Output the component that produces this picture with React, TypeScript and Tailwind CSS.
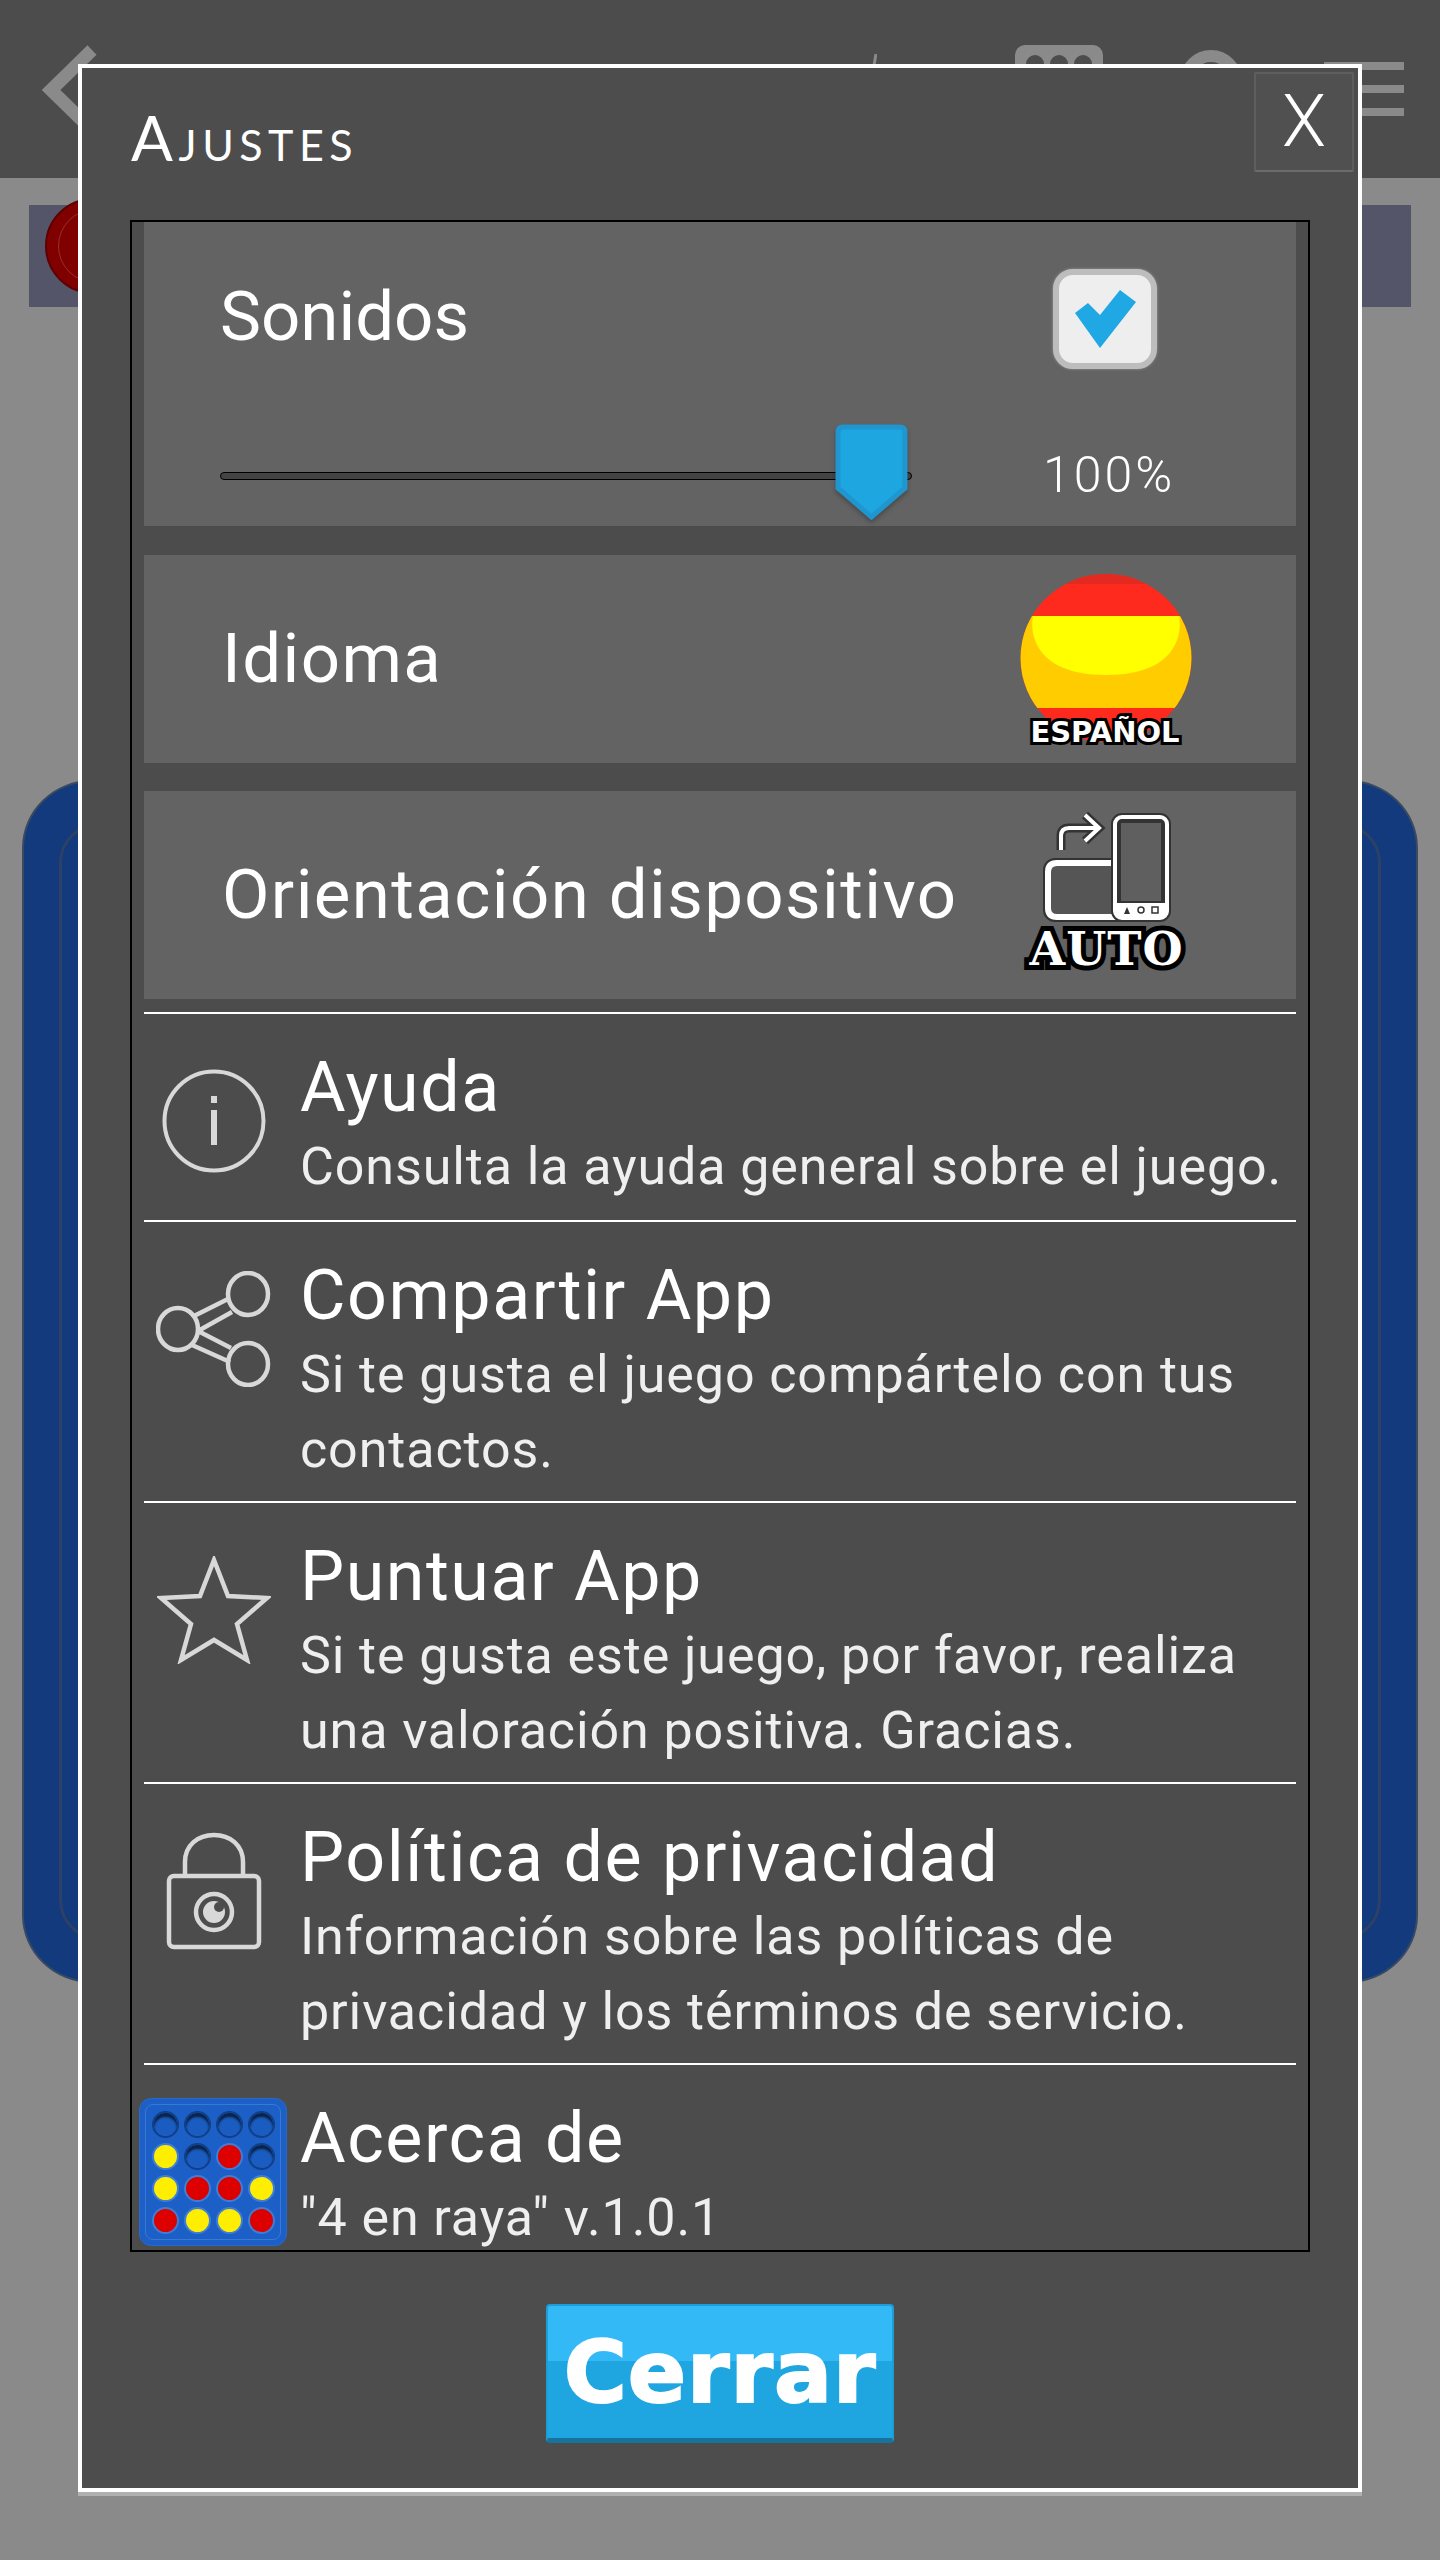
import type { ReactNode } from "react";

const bodyFont = "font-['Roboto',sans-serif]";

function Disc({ color }: { color: "none" | "red" | "yellow" }) {
  if (color === "none") {
    return (
      <div className="h-[27px] w-[27px] rounded-full border-2 border-[#123f86] bg-[#1a5cc0] shadow-[inset_0_4px_2px_#0a2448]" />
    );
  }

  return (
    <div
      className={
        color === "red"
          ? "h-[27px] w-[27px] rounded-full border-2 border-[#3f7ed6] bg-[#dd0000]"
          : "h-[27px] w-[27px] rounded-full border-2 border-[#3f7ed6] bg-[#ffee00]"
      }
    />
  );
}

function BoardIcon() {
  const cells: ("none" | "red" | "yellow")[] = [
    "none", "none", "none", "none",
    "yellow", "none", "red", "none",
    "yellow", "red", "red", "yellow",
    "red", "yellow", "yellow", "red",
  ];

  return (
    <div className="h-[148px] w-[148px] shrink-0 rounded-[12px] border border-[#2a68c8] bg-[#1c5fc6] p-[5px]">
      <div className="grid h-full w-full grid-cols-4 place-items-center rounded-[8px] border border-[#3a78d2] p-[3px]">
        {cells.map((cell, index) => (
          <Disc key={index} color={cell} />
        ))}
      </div>
    </div>
  );
}

function InfoIcon() {
  return (
    <svg viewBox="0 0 104 104" className="h-[104px] w-[104px]" fill="none" stroke="#d8d8d8">
      <circle cx="52" cy="52" r="49.5" strokeWidth="4" />
      <rect x="49" y="27" width="6" height="7" fill="#d8d8d8" stroke="none" />
      <rect x="49" y="41" width="6" height="35" fill="#d8d8d8" stroke="none" />
    </svg>
  );
}

function ShareIcon() {
  return (
    <svg viewBox="0 0 116 116" className="h-[116px] w-[116px]" fill="none" stroke="#d8d8d8" strokeWidth="4.5">
      <ellipse cx="22" cy="58" rx="20" ry="21" />
      <ellipse cx="92" cy="23" rx="20" ry="21" />
      <ellipse cx="92" cy="93" rx="20" ry="21" />
      <path d="M38 45 74 27M42 60 76 41M42 60 75 77M36 74 74 91" />
    </svg>
  );
}

function StarIcon() {
  return (
    <svg viewBox="0 0 114 108" className="h-[108px] w-[114px]" fill="none" stroke="#d8d8d8" strokeWidth="4.5">
      <path d="M57 4 71 40 110 42 80 68 90 104 57 84 24 104 34 68 4 42 43 40Z" strokeLinejoin="miter" />
    </svg>
  );
}

function LockIcon() {
  return (
    <svg viewBox="0 0 96 118" className="h-[118px] w-[96px]" fill="none" stroke="#d8d8d8" strokeWidth="4.5">
      <path d="M19 44V30C19 13 32 3 48 3s29 10 29 27v14" />
      <rect x="3" y="44" width="90" height="71" rx="5" />
      <circle cx="48" cy="80" r="18" />
      <circle cx="48" cy="80" r="11" fill="#d8d8d8" stroke="none" />
      <circle cx="53" cy="75" r="5" fill="#4b4c4b" stroke="none" />
    </svg>
  );
}

function SpainBall() {
  return (
    <div className="relative h-[178px] w-[172px]">
      <svg viewBox="0 0 172 178" className="h-full w-full">
        <defs>
          <clipPath id="ball">
            <ellipse cx="86" cy="88" rx="85.5" ry="84" />
          </clipPath>
        </defs>
        <g clipPath="url(#ball)">
          <rect x="0" y="0" width="172" height="178" fill="#ff2a1e" />
          <rect x="0" y="0" width="172" height="14" fill="#e22a20" />
          <rect x="0" y="46" width="172" height="92" fill="#ffcc00" />
          <path d="M13 46H159C162 60 160 105 86 105 12 105 10 60 13 46Z" fill="#ffff00" />
        </g>
      </svg>
      <span className="absolute right-[6px] bottom-0 left-[4px] text-center font-['DejaVu_Sans',sans-serif] text-[29px] leading-[31px] font-bold whitespace-nowrap text-white [-webkit-text-stroke:6px_black] [paint-order:stroke_fill]">
        ESPAÑOL
      </span>
    </div>
  );
}

function RotateIcon() {
  return (
    <div className="relative h-[166px] w-[163px]">
      <svg viewBox="0 0 163 112" className="h-[112px] w-[163px]" fill="none">
        <path d="M36 38V24Q36 16 44 16H72M60 3 74 16 60 29" stroke="#333" strokeWidth="9" />
        <path d="M36 38V24Q36 16 44 16H72M60 3 74 16 60 29" stroke="#fff" strokeWidth="4" />
        <rect x="22" y="50" width="90" height="56" rx="8" fill="#555" stroke="#333" strokeWidth="8" />
        <path d="M96 51H32Q23 51 23 60V96Q23 105 32 105H96" stroke="#fff" strokeWidth="6" />
        <rect x="90" y="5" width="52" height="101" rx="7" fill="#5f5f5f" stroke="#333" strokeWidth="8" />
        <rect x="90" y="5" width="52" height="101" rx="7" stroke="#fff" strokeWidth="4" />
        <rect x="95" y="10" width="42" height="80" stroke="#333" strokeWidth="2" />
        <rect x="92" y="91" width="48" height="14" fill="#fff" />
        <path d="M99 102 102 95 105 102Z" fill="#333" />
        <circle cx="116" cy="98" r="3" stroke="#333" strokeWidth="1.5" />
        <rect x="127" y="95" width="6" height="6" stroke="#333" strokeWidth="1.5" />
      </svg>
      <span className="absolute right-0 bottom-[6px] left-0 text-center font-['DejaVu_Serif',serif] text-[46px] leading-[46px] font-bold tracking-[1px] whitespace-nowrap text-white [-webkit-text-stroke:10px_black] [paint-order:stroke_fill]">
        AUTO
      </span>
    </div>
  );
}

function SettingRow({ label, padding, children }: { label: string; padding: string; children: ReactNode }) {
  return (
    <div className={`flex h-[208px] items-center justify-between bg-[#636363] pl-[78px] ${padding}`}>
      <span className="text-[69px] tracking-[1.4px] text-white">{label}</span>
      {children}
    </div>
  );
}

function MenuRow({
  icon,
  title,
  text,
  tall,
}: {
  icon: ReactNode;
  title: string;
  text: ReactNode;
  tall?: boolean;
}) {
  return (
    <div
      className={
        tall
          ? "flex h-[281px] gap-[16px] border-t-2 border-white"
          : "flex h-[208px] gap-[16px] border-t-2 border-white"
      }
    >
      <div className="flex h-[190px] w-[140px] shrink-0 items-center justify-center pt-[23px]">{icon}</div>
      <div className="min-w-0 pt-[31px]">
        <p className="text-[70px] leading-[84px] tracking-[1.5px] text-white">{title}</p>
        <p className="text-[52px] leading-[75px] tracking-[0.9px] text-[#efefef]">{text}</p>
      </div>
    </div>
  );
}

function Background() {
  return (
    <div className="flex h-[2560px] flex-col bg-[#8a8a8a]">
      <header className="flex h-[178px] shrink-0 items-start justify-between bg-[#4b4c4b] pt-[45px] pr-[36px] pl-[42px]">
        <svg viewBox="0 0 56 90" className="h-[90px] w-[56px]" fill="none" stroke="#8a8a8a" strokeWidth="13">
          <path d="M50 5 9 45 50 85" />
        </svg>
        <div className="flex items-start">
          <svg viewBox="0 0 10 50" className="mt-[7px] h-[50px] w-[10px]" fill="none" stroke="#8a8a8a" strokeWidth="3">
            <path d="M9 2 1 48" />
          </svg>
          <div className="ml-[138px] flex h-[60px] w-[88px] justify-center gap-[6px] rounded-[10px] bg-[#8a8a8a] pt-[10px]">
            <div className="h-[30px] w-[18px] rounded-full bg-[#4b4c4b]" />
            <div className="h-[30px] w-[18px] rounded-full bg-[#4b4c4b]" />
            <div className="h-[30px] w-[18px] rounded-full bg-[#4b4c4b]" />
          </div>
          <div className="mt-[5px] ml-[77px] h-[62px] w-[62px] rounded-full border-[12px] border-[#8a8a8a]" />
          <div className="ml-[82px] flex w-[80px] flex-col gap-[15px] pt-[17px]">
            <div className="h-[8px] bg-[#8a8a8a]" />
            <div className="h-[8px] bg-[#8a8a8a]" />
            <div className="h-[8px] bg-[#8a8a8a]" />
          </div>
        </div>
      </header>
      <div className="mx-[29px] mt-[27px] h-[102px] shrink-0 bg-[#55556a]">
        <div className="-mt-[7px] ml-[16px] flex h-[96px] w-[100px] items-center justify-center rounded-full border-2 border-[#5e0000] bg-[#800000]">
          <div className="h-[74px] w-[74px] rounded-full border border-[#983030]" />
        </div>
      </div>
      <div className="mx-[22px] mt-[473px] h-[1203px] rounded-[70px/68px] border-2 border-[#3a4a62] bg-[#123a7c] px-[35px] py-[41px]">
        <div className="h-full rounded-[40px] border-[3px] border-[#2d4066]" />
      </div>
    </div>
  );
}

export default function App() {
  return (
    <div className={`relative h-[2560px] w-[1440px] overflow-hidden ${bodyFont}`}>
      <Background />

      <section className="absolute top-[64px] left-[78px] flex h-[2428px] w-[1284px] flex-col border-4 border-white bg-[#4d4d4d] shadow-[0_4px_0_#b0b0b0]">
        <div className="flex h-[152px] shrink-0 items-start justify-between pt-[4px] pr-[4px] pl-[49px]">
          <h2 className="pt-[29px] font-['Lato',sans-serif] text-[62px] leading-[72px] tracking-[5.5px] text-white [font-variant:small-caps]">
            Ajustes
          </h2>
          <button
            type="button"
            className="flex h-[100px] w-[100px] items-center justify-center rounded-[2px] border-2 border-[#5e5e5e] border-b-[#6c6c6c] bg-[#505050] text-[72px] font-light text-white"
          >
            X
          </button>
        </div>

        <div className="mx-[48px] flex h-[2032px] flex-col overflow-hidden border-2 border-black bg-[#4b4c4b] px-[12px]">
          <div className="h-[304px] shrink-0 bg-[#636363] pt-[47px] pr-[139px] pl-[76px]">
            <div className="flex items-start justify-between">
              <span className="pt-[6px] text-[69px] leading-[84px] text-white">Sonidos</span>
              <div className="flex h-[100px] w-[104px] items-center justify-center rounded-[20px] border-[6px] border-[#bdbdbd] bg-[#eeeeee] shadow-[0_0_3px_#999]">
                <svg viewBox="0 0 61 58" className="h-[58px] w-[61px]" fill="#1fa8e4">
                  <path d="M0 23 13 13 25 25 45 0 61 12 25 58Z" />
                </svg>
              </div>
            </div>
            <div className="mt-[69px] flex items-center">
              <div className="relative h-[8px] w-[692px] shrink-0 rounded-full border border-black bg-[#444]">
                <svg viewBox="0 0 73 96" className="absolute top-[-49px] left-[614px] h-[96px] w-[73px] drop-shadow-[0_3px_2px_rgba(0,0,0,0.25)]" fill="#1ea6e0" stroke="#1f96cf" strokeWidth="5">
                  <path d="M8 3H65Q70 3 70 8V64L36.5 93 3 64V8Q3 3 8 3Z" />
                </svg>
              </div>
              <span className="ml-[131px] text-[50px] font-light tracking-[3px] text-white">100%</span>
            </div>
          </div>

          <div className="mt-[29px] flex flex-col gap-[28px]">
            <SettingRow label="Idioma" padding="pr-[104px]">
              <SpainBall />
            </SettingRow>
            <SettingRow label="Orientación dispositivo" padding="pr-[108px]">
              <RotateIcon />
            </SettingRow>
          </div>

          <div className="mt-[13px]">
            <MenuRow icon={<InfoIcon />} title="Ayuda" text="Consulta la ayuda general sobre el juego." />
            <MenuRow
              tall
              icon={<ShareIcon />}
              title="Compartir App"
              text={<>Si te gusta el juego compártelo con tus<br />contactos.</>}
            />
            <MenuRow
              tall
              icon={<StarIcon />}
              title="Puntuar App"
              text={<>Si te gusta este juego, por favor, realiza<br />una valoración positiva. Gracias.</>}
            />
            <MenuRow
              tall
              icon={<LockIcon />}
              title="Política de privacidad"
              text={<>Información sobre las políticas de<br />privacidad y los términos de servicio.</>}
            />
            <div className="flex gap-[10px] border-t-2 border-white">
              <div className="-ml-[5px] w-[151px] shrink-0 pt-[33px]">
                <BoardIcon />
              </div>
              <div className="pt-[31px]">
                <p className="text-[70px] leading-[84px] tracking-[1.5px] text-white">Acerca de</p>
                <p className="text-[52px] leading-[75px] tracking-[0.9px] text-[#efefef]">"4 en raya" v.1.0.1</p>
              </div>
            </div>
          </div>
        </div>

        <div className="flex flex-1 justify-center pt-[52px]">
          <button
            type="button"
            className="h-[139px] w-[348px] rounded-[4px] border-2 border-b-[5px] border-[#1a9ed8] border-b-[#17739c] bg-[linear-gradient(#33b9f5_42%,#1fa6e0_42%)] font-['DejaVu_Sans',sans-serif] text-[86px] leading-none font-bold tracking-[1px] text-white [-webkit-text-stroke:2px_white]"
          >
            Cerrar
          </button>
        </div>
      </section>
    </div>
  );
}
